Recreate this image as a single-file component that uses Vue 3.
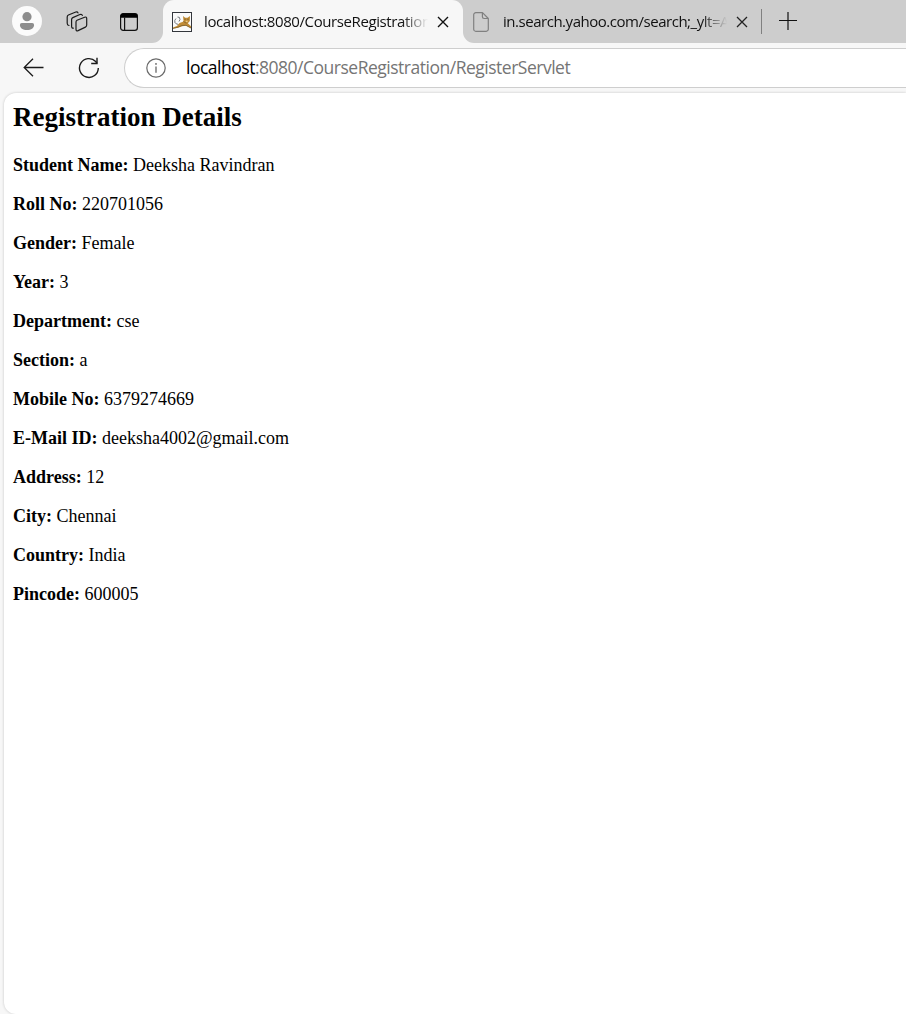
<script setup>
const details = [
  ['Student Name', 'Deeksha Ravindran'],
  ['Roll No', '220701056'],
  ['Gender', 'Female'],
  ['Year', '3'],
  ['Department', 'cse'],
  ['Section', 'a'],
  ['Mobile No', '6379274669'],
  ['E-Mail ID', 'deeksha4002@gmail.com'],
  ['Address', '12'],
  ['City', 'Chennai'],
  ['Country', 'India'],
  ['Pincode', '600005'],
]
</script>

<template>
  <div class="browser">
    <header class="tabs">
      <div class="tools">
        <svg class="avatar" width="30" height="30" viewBox="0 0 30 30">
          <circle cx="15" cy="15" r="15" fill="#fbfbfb" />
          <circle cx="15" cy="10.7" r="4.6" fill="#8d8d8d" />
          <path d="M9.8 17h10.4a1.9 1.9 0 0 1 1.9 1.9c0 3.100-3 5.200-7.100 5.200s-7.100-2.100-7.100-5.200A1.900 1.900 0 0 1 9.800 17z" fill="#8d8d8d" />
        </svg>
        <svg class="spaces" width="22" height="22" viewBox="0 0 22 22" fill="none" stroke="#1b1b1b" stroke-width="1.2" stroke-linejoin="round" stroke-linecap="round">
          <path d="M11 9.300 18.600 6.200Q20.700 5.400 20.700 7.600V14Q20.700 15.500 19.400 16.100L12.100 19.600Q10 20.500 10 18.300V11Q10 9.800 11 9.300z" />
          <path d="M7.300 17.200Q5.600 17.300 5.600 15.300V8.500Q5.600 7.200 6.800 6.600L13.900 3.500Q16 2.900 16.300 4.500" />
          <path d="M3 14.500Q1.200 14.300 1.200 12.300V6Q1.200 4.600 2.400 4L9.800 1Q11.500.5 12 1.900" />
        </svg>
        <svg class="workspace" width="18" height="18" viewBox="0 0 18 18">
          <rect x=".6" y=".6" width="16.8" height="16.8" rx="2.6" fill="none" stroke="#111" stroke-width="1.2" />
          <path d="M.5 4.800V3A2.500 2.500 0 0 1 3 .5h12A2.500 2.500 0 0 1 17.500 3v1.800z" fill="#000" />
          <path d="M4.600 4.500V17.400" stroke="#111" stroke-width="1.200" />
        </svg>
      </div>
      <div class="tab active">
        <svg width="20" height="20" viewBox="0 0 20 20">
          <rect x=".5" y=".5" width="19" height="19" fill="#fafafa" stroke="#33363c" />
          <path d="M3 11Q2 8 4 6.500M5.500 5Q8 4.500 8 7.500L7 9.500M3.500 11.500l3 1" fill="none" stroke="#72767c" stroke-width="1" />
          <path d="M1 15.500 5 14 7.500 11 11 9.700 11.500 9 11 4l2.200 1.700h2.300L18 4l-.2 5-2 2.200L19 14.300v2l-5-2.500-4 .4-4 1.500-5 .8z" fill="#c18c36" />
          <path d="M1 16.500 6 15.200 10 13.500 14 13.300 19 16M11.500 9.500l3 1.800" fill="none" stroke="#745a2e" stroke-width=".7" />
          <path d="M12.500 7.200h1M15.500 7.200h1" stroke="#594820" stroke-width="1" />
          <path d="M13.800 9.300h1.800" stroke="#f3dca0" stroke-width="1" />
        </svg>
        <span class="title first">localhost:8080/CourseRegistration/</span>
        <svg class="close" width="12" height="12" viewBox="0 0 12 12"><path d="M1 1l10 10M11 1 1 11" stroke="#111" stroke-width="1.4" /></svg>
      </div>
      <div class="tab inactive">
        <svg width="16" height="20" viewBox="0 0 16 20" fill="none" stroke="#808080" stroke-width="1.2" stroke-linejoin="round">
          <path d="M2.800.7h6.700L15.300 6.500v10.700a2.100 2.100 0 0 1-2.100 2.100H2.800A2.100 2.100 0 0 1 .7 17.200V2.800A2.100 2.100 0 0 1 2.800.7zM9.400.8v4a1.700 1.700 0 0 0 1.700 1.700h4" />
        </svg>
        <span class="title second">in.search.yahoo.com/search;_ylt=A</span>
        <svg class="close" width="12" height="12" viewBox="0 0 12 12"><path d="M1 1l10 10M11 1 1 11" stroke="#222" stroke-width="1.3" /></svg>
      </div>
      <div class="strip-end">
        <span class="divider"></span>
        <svg class="plus" width="18" height="18" viewBox="0 0 18 18"><path d="M0 8.500h18M9 0v18" stroke="#111" stroke-width="1.2" /></svg>
      </div>
    </header>

    <nav class="toolbar">
      <svg class="back" width="21" height="19" viewBox="0 0 21 19" fill="none" stroke="#1b1b1b" stroke-width="1.3">
        <path d="M20.500 9.500H1M10 .8 1.200 9.500 10 18.200" />
      </svg>
      <svg class="reload" width="22" height="22" viewBox="0 0 22 22" fill="none" stroke="#1b1b1b" stroke-width="1.4">
        <path d="M20.300 11A9.400 9.400 0 1 1 17.700 4.500L19 6.300" />
        <path d="M19 .8v5.700h-5.800" />
      </svg>
      <div class="address">
        <svg width="20" height="20" viewBox="0 0 20 20">
          <circle cx="10" cy="10" r="9.200" fill="none" stroke="#6a6a6a" stroke-width="1.2" />
          <path d="M10 8.500v6.300" stroke="#666" stroke-width="1.3" /><circle cx="10" cy="5.900" r=".9" fill="#666" />
        </svg>
        <span class="url"><b>localhost</b>:8080/CourseRegistration/RegisterServlet</span>
      </div>
    </nav>

    <main class="content">
      <h2>Registration Details</h2>
      <p v-for="[label, value] in details" :key="label"><strong>{{ label }}:</strong> {{ value }}</p>
    </main>
  </div>
</template>

<style>
body { margin: 0; overflow: hidden; }
</style>

<style scoped>
.browser {
  width: 906px;
  height: 1014px;
  display: flex;
  flex-direction: column;
  overflow: hidden;
  background: #f7f7f7;
  font-family: "Open Sans", "Noto Sans", sans-serif;
}
svg { display: block; flex: none; }
.tabs { display: flex; height: 43px; flex: none; }
.tools {
  display: flex;
  box-sizing: border-box;
  flex: none;
  width: 163px;
  padding-left: 12px;
  align-items: center;
  background: #cdcdcd;
  border-bottom-right-radius: 11px;
}
.avatar { margin-top: -1px; }
.spaces { margin-left: 24px; }
.workspace { margin-left: 32px; }
.tab { display: flex; flex: none; align-items: center; box-sizing: border-box; }
.active {
  width: 300px;
  padding-left: 9px;
  background: linear-gradient(#cdcdcd, #cdcdcd) top / 100% 14px no-repeat;
  position: relative;
  z-index: 0;
}
.active::before {
  content: "";
  position: absolute;
  z-index: -1;
  inset: 0;
  background: #f7f7f7;
  border-radius: 11px 11px 0 0;
}
.inactive {
  width: 298px;
  padding-left: 10px;
  background: #cdcdcd;
  border-bottom-left-radius: 11px;
}
.title {
  overflow: hidden;
  white-space: nowrap;
  color: #111;
  font-size: 15px;
  line-height: 22px;
  margin-top: -2px;
  -webkit-mask-image: linear-gradient(to right, #000 calc(100% - 26px), transparent);
  mask-image: linear-gradient(to right, #000 calc(100% - 26px), transparent);
}
.first { width: 224px; margin-left: 12px; letter-spacing: -.4px; }
.second { width: 224px; margin-left: 14px; letter-spacing: -.47px; }
.close { margin-left: 9px; }
.strip-end { display: flex; flex: 1; align-items: center; background: #cdcdcd; }
.divider { width: 1px; height: 25px; background: #808080; }
.plus { margin-left: 17px; margin-top: -1px; }
.toolbar { display: flex; align-items: center; height: 50px; flex: none; }
.back { margin-left: 23px; margin-top: -1px; }
.reload { margin-left: 34px; }
.address {
  box-sizing: border-box;
  display: flex;
  align-items: center;
  flex: 1;
  height: 40px;
  margin-left: 24px;
  padding-left: 21px;
  background: #fff;
  border: 1px solid #cecece;
  border-right: 0;
  border-radius: 20px 0 0 20px;
}
.url { margin-left: 20px; margin-top: -2px; color: #757575; font-size: 17.5px; letter-spacing: -.49px; white-space: nowrap; }
.url b { color: #000; font-weight: 400; }
.content {
  flex: 1;
  margin-left: 4px;
  padding: 9px 9px 0;
  background: #fff;
  border-radius: 12px 0 0 12px;
  box-shadow: 0 0 3px rgba(0, 0, 0, .2);
  color: #000;
  font: 18px/21px "Liberation Serif", serif;
}
h2 { margin: 0 0 22px; font-size: 27px; line-height: 31px; }
p { margin: 0 0 18px; }
</style>
